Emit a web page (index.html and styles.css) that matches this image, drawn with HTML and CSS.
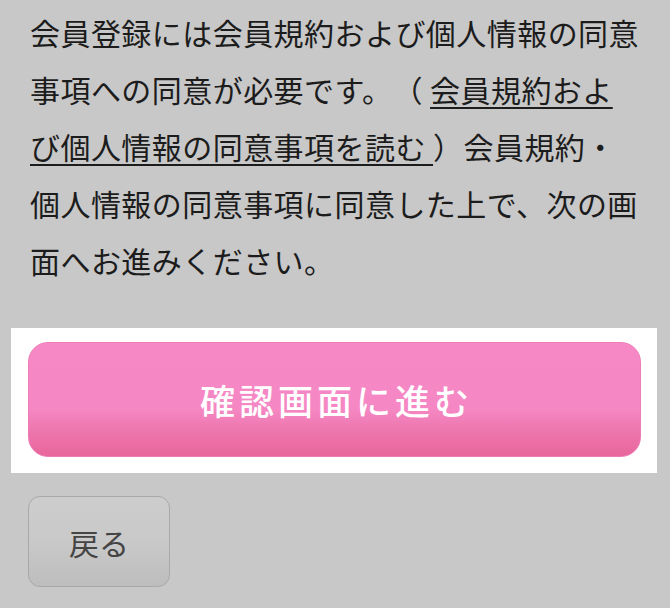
FILE: index.html
```html
<!DOCTYPE html>
<html lang="ja">
<head>
<meta charset="utf-8">
<link rel="stylesheet" href="styles.css">
</head>
<body>
<div class="page">
  <p class="notice">会員登録には会員規約および個人情報の同意事項への同意が必要です。（ <a class="link" href="#">会員規約および個人情報の同意事項を読む </a>）会員規約・個人情報の同意事項に同意した上で、次の画面へお進みください。</p>
  <div class="spotlight">
    <button class="btn-next" type="button">確認画面に進む</button>
  </div>
  <div class="back-row">
    <button class="btn-back" type="button">戻る</button>
  </div>
</div>
</body>
</html>
```
FILE: styles.css
```css
html, body {
  margin: 0;
  padding: 0;
  background: #c8c8c8;
}
body {
  font-family: "Noto Sans CJK JP", "Noto Sans", sans-serif;
  color: #1c1c1c;
}
.page {
  width: 670px;
  height: 608px;
  overflow: hidden;
  padding-top: 4px;
  box-sizing: border-box;
}
.notice {
  margin: 0 0 0 30px;
  width: 613px;
  font-size: 30px;
  letter-spacing: 0.45px;
  line-height: 57px;
  text-spacing-trim: space-all;
}
.link {
  color: #1c1c1c;
  text-decoration: underline;
  text-underline-offset: 5px;
  text-decoration-thickness: 1.5px;
}
.spotlight {
  margin: 39px 13px 0 11px;
  background: #ffffff;
  padding: 14px 16px 16px 17px;
}
.btn-next {
  display: block;
  width: 100%;
  height: 115px;
  border: 1px solid #ee7db6;
  border-radius: 20px;
  background: linear-gradient(to bottom, #f689c5 0%, #f588c4 58%, #ee78b0 75%, #e8669c 100%);
  color: #ffffff;
  font-family: "Noto Sans CJK JP", sans-serif;
  font-weight: 500;
  font-size: 35px;
  letter-spacing: 4px;
  padding: 0 0 0 4px;
  cursor: pointer;
}
.back-row {
  padding: 23px 0 0 28px;
}
.btn-back {
  width: 142px;
  height: 91px;
  border: 1.5px solid #a9a9a9;
  border-radius: 12px;
  background: linear-gradient(to bottom, #cdcdcd 0%, #c9c9c9 50%, #bdbdbd 100%);
  color: #444444;
  font-family: "Noto Sans CJK JP", sans-serif;
  font-size: 30px;
  letter-spacing: 0;
  padding: 0;
}
```
